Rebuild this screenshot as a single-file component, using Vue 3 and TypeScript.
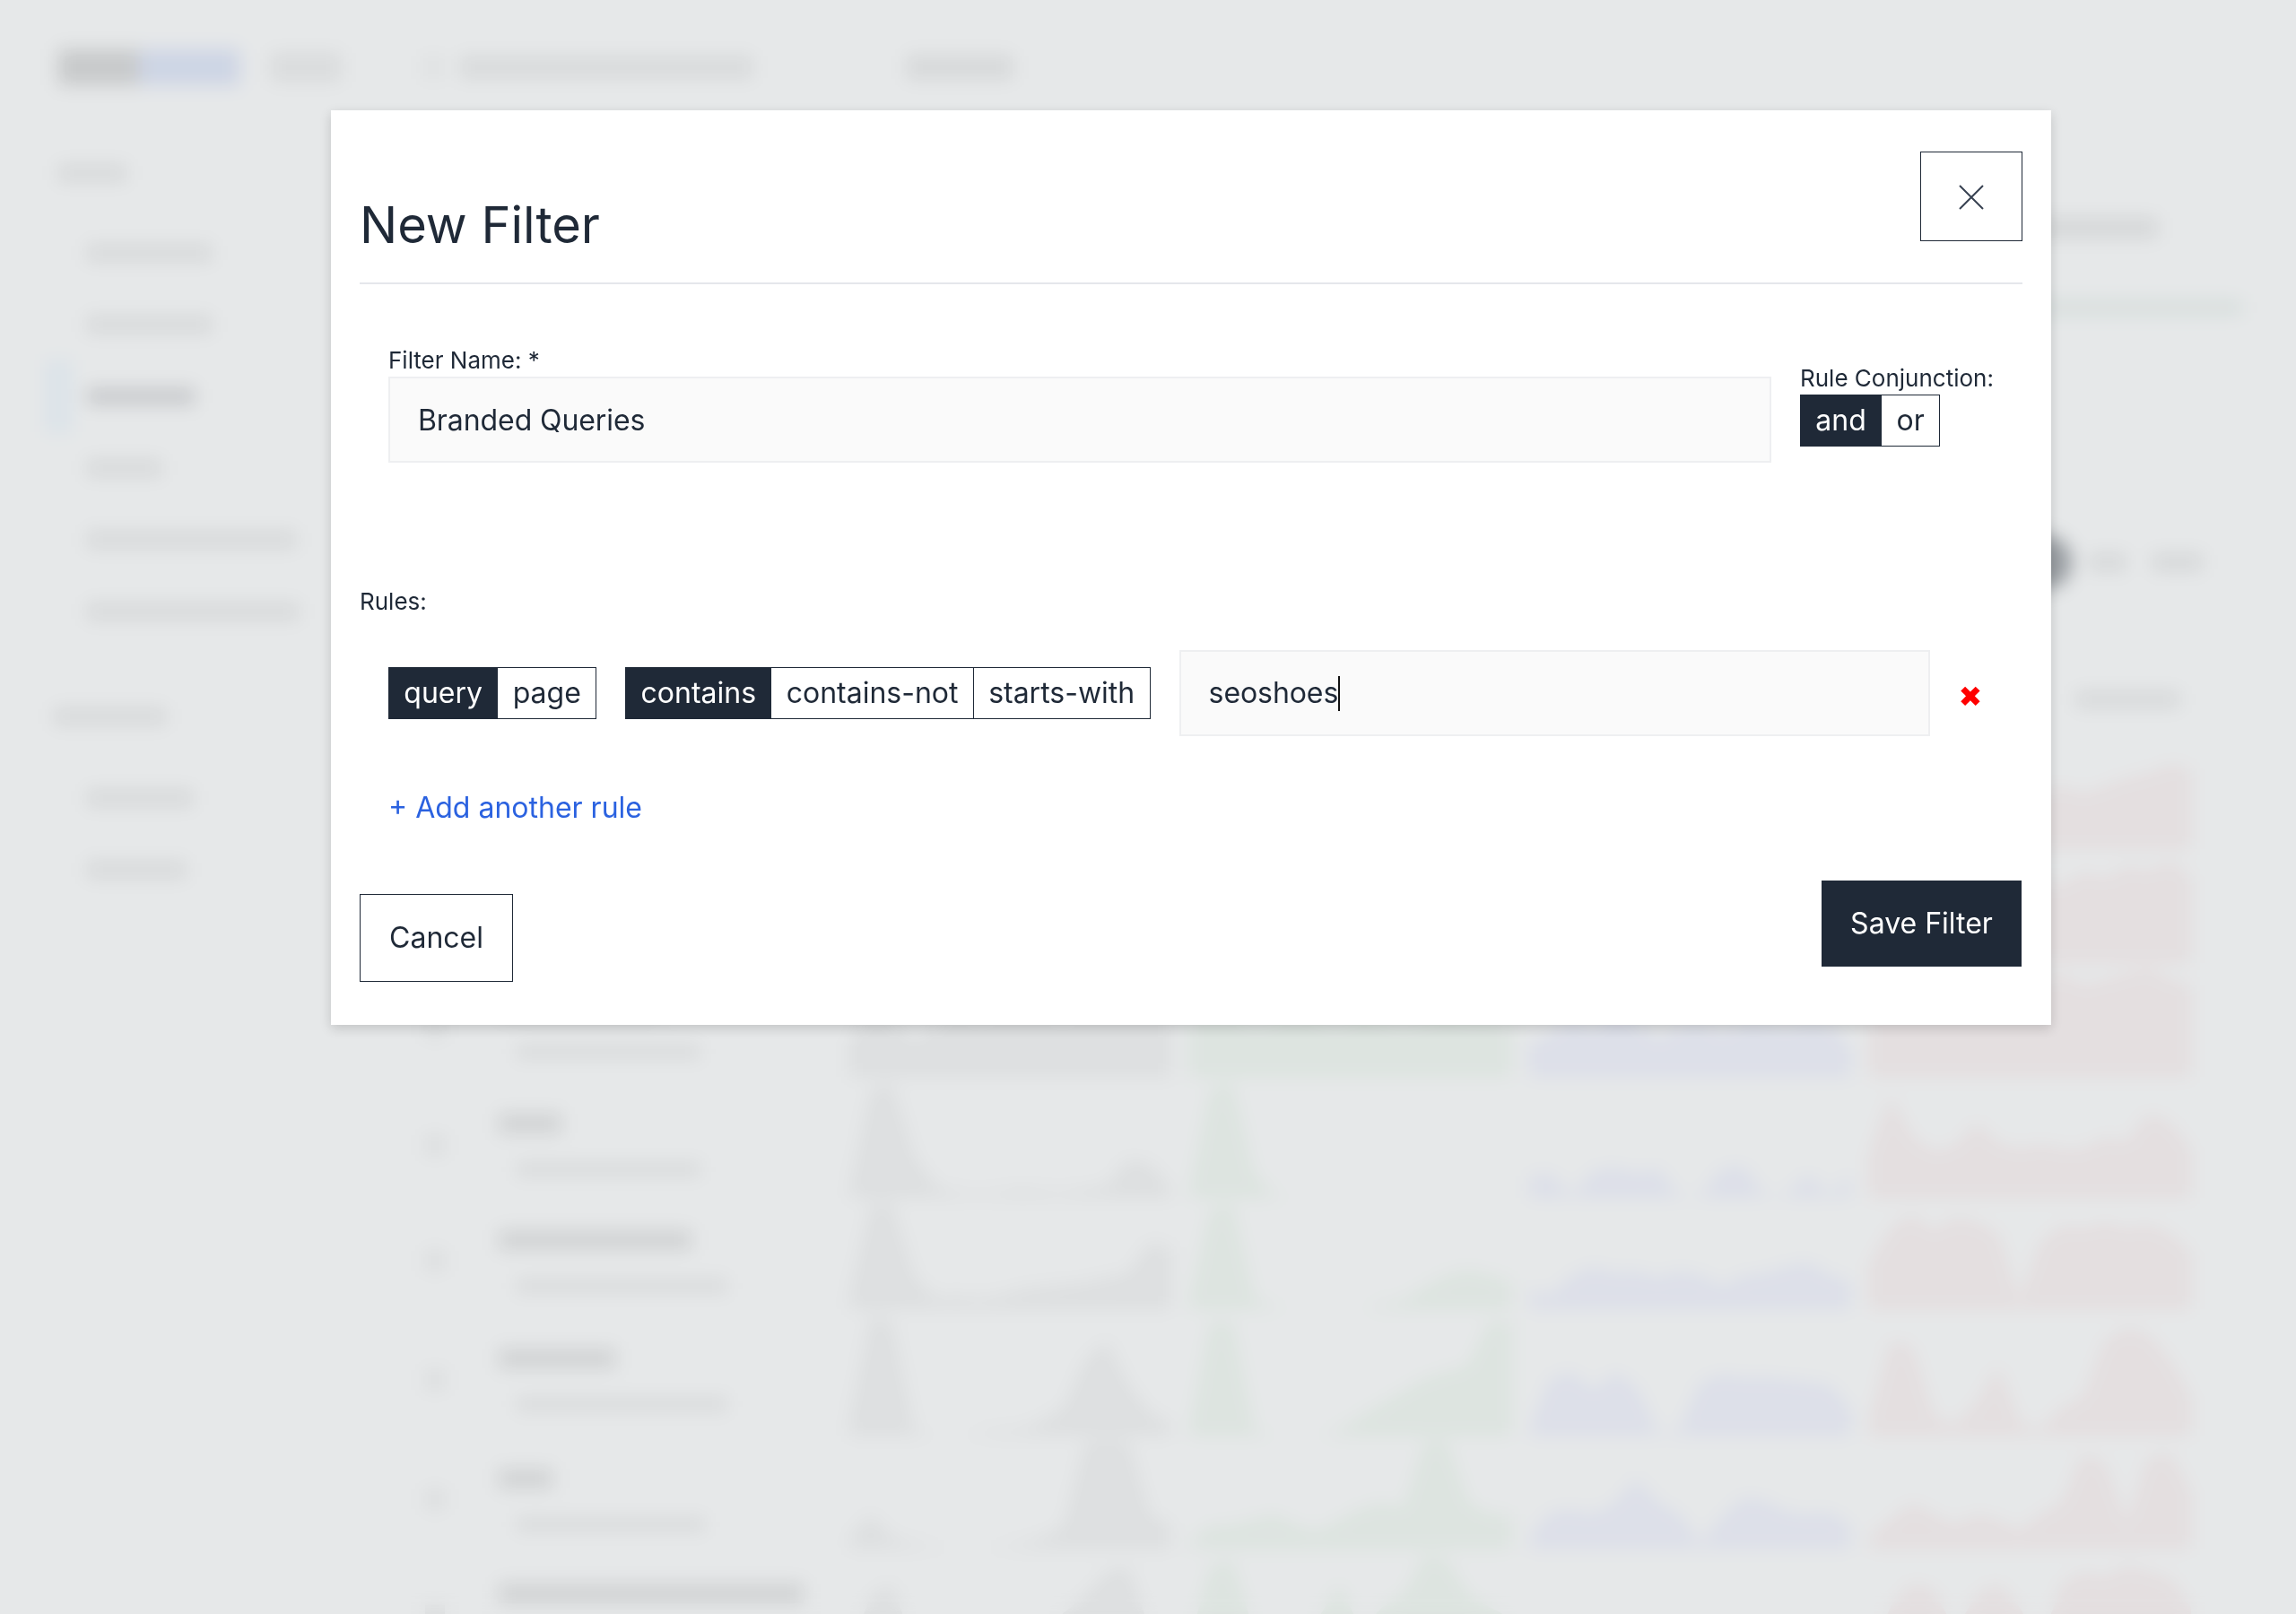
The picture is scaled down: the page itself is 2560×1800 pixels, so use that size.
<script setup lang="ts">
interface Row {
  height: number
  name: number
  sub: number
  charts: [number[], number[], number[], number[]]
}

const chartColors = ['grey', 'green', 'blue', 'red']

const flat = [0, 0, 0, 0, 0, 0, 0, 0, 0, 0, 0, 0, 0, 0, 0, 0]

const rows: Row[] = [
  { height: 127, name: 160, sub: 200, charts: [flat, flat, flat, [0.3, 0.35, 0.4, 0.38, 0.45, 0.5, 0.42, 0.46, 0.5, 0.55, 0.48, 0.55, 0.62, 0.66, 0.74, 0.7]] },
  { height: 127, name: 200, sub: 190, charts: [flat, flat, flat, [0.6, 0.72, 0.66, 0.7, 0.75, 0.62, 0.7, 0.8, 0.72, 0.68, 0.8, 0.74, 0.85, 0.8, 0.9, 0.75]] },
  { height: 127, name: 180, sub: 205, charts: [
    [0.3, 0.62, 0.5, 0.3, 0.45, 0.66, 0.5, 0.6, 0.7, 0.62, 0.5, 0.68, 0.75, 0.6, 0.7, 0.6],
    [0.5, 0.62, 0.55, 0.45, 0.5, 0.6, 0.5, 0.45, 0.55, 0.5, 0.45, 0.5, 0.55, 0.5, 0.5, 0.45],
    [0.3, 0.35, 0.55, 0.4, 0.65, 0.5, 0.3, 0.45, 0.5, 0.35, 0.5, 0.48, 0.42, 0.5, 0.45, 0.25],
    [0.8, 0.85, 0.9, 0.8, 0.85, 0.75, 0.9, 0.8, 0.85, 0.9, 0.8, 0.85, 0.9, 0.95, 0.85, 0.8]
  ] },
  { height: 135, name: 70, sub: 205, charts: [
    [0.05, 0.9, 0.95, 0.35, 0.1, 0.05, 0.04, 0.05, 0.08, 0.06, 0.05, 0.08, 0.1, 0.32, 0.28, 0.08],
    [0.02, 0.9, 0.95, 0.2, 0.02, 0, 0, 0, 0, 0, 0, 0, 0, 0, 0, 0],
    [0.18, 0.2, 0.02, 0.22, 0.25, 0.2, 0.24, 0.02, 0.02, 0.24, 0.26, 0.02, 0.03, 0.2, 0.02, 0.2],
    [0.35, 0.85, 0.5, 0.38, 0.42, 0.62, 0.45, 0.4, 0.44, 0.4, 0.4, 0.5, 0.45, 0.7, 0.62, 0.4]
  ] },
  { height: 124, name: 215, sub: 235, charts: [
    [0.1, 0.95, 0.95, 0.3, 0.1, 0.12, 0.1, 0.12, 0.18, 0.2, 0.22, 0.24, 0.28, 0.32, 0.6, 0.55],
    [0.05, 0.9, 0.95, 0.1, 0.02, 0, 0, 0, 0, 0.05, 0.08, 0.2, 0.3, 0.35, 0.3, 0.25],
    [0.18, 0.12, 0.3, 0.38, 0.32, 0.34, 0.28, 0.34, 0.3, 0.2, 0.3, 0.32, 0.38, 0.42, 0.3, 0.25],
    [0.4, 0.72, 0.85, 0.7, 0.82, 0.78, 0.68, 0.05, 0.6, 0.75, 0.72, 0.78, 0.72, 0.76, 0.68, 0.5]
  ] },
  { height: 141, name: 130, sub: 235, charts: [
    [0.1, 0.95, 0.9, 0.05, 0, 0, 0.02, 0.05, 0.05, 0.12, 0.22, 0.6, 0.75, 0.4, 0.18, 0.1],
    [0.02, 0.9, 0.9, 0.05, 0, 0, 0, 0.05, 0.15, 0.25, 0.35, 0.45, 0.5, 0.55, 0.9, 0.9],
    [0.05, 0.45, 0.5, 0.35, 0.5, 0.38, 0.02, 0.04, 0.42, 0.48, 0.45, 0.46, 0.44, 0.42, 0.4, 0.2],
    [0.1, 0.75, 0.7, 0.15, 0.08, 0.25, 0.55, 0.1, 0.05, 0.22, 0.3, 0.75, 0.85, 0.8, 0.6, 0.3]
  ] },
  { height: 126, name: 60, sub: 210, charts: [
    [0.1, 0.3, 0.1, 0.05, 0.02, 0, 0, 0.02, 0.05, 0.1, 0.2, 0.95, 0.95, 0.95, 0.3, 0.2],
    [0.05, 0.2, 0.2, 0.25, 0.3, 0.2, 0.15, 0.25, 0.35, 0.4, 0.35, 0.95, 0.95, 0.4, 0.3, 0.3],
    [0.1, 0.32, 0.34, 0.3, 0.4, 0.62, 0.4, 0.3, 0.04, 0.28, 0.45, 0.42, 0.32, 0.3, 0.32, 0.2],
    [0.1, 0.25, 0.4, 0.3, 0.2, 0.3, 0.25, 0.15, 0.3, 0.4, 0.85, 0.75, 0.2, 0.8, 0.85, 0.5]
  ] },
  { height: 130, name: 340, sub: 240, charts: [
    [0.1, 0.6, 0.7, 0.15, 0.05, 0.1, 0.2, 0.3, 0.25, 0.3, 0.45, 0.6, 0.8, 0.85, 0.3, 0.2],
    [0.2, 0.85, 0.9, 0.3, 0.1, 0.2, 0.4, 0.7, 0.3, 0.5, 0.6, 0.95, 0.9, 0.6, 0.5, 0.4],
    [0.05, 0.1, 0.05, 0.2, 0.1, 0.05, 0.1, 0.2, 0.1, 0.05, 0.2, 0.1, 0.05, 0.1, 0.1, 0.05],
    [0.1, 0.5, 0.7, 0.65, 0.3, 0.6, 0.7, 0.5, 0.2, 0.7, 0.8, 0.75, 0.85, 0.8, 0.75, 0.5]
  ] }
]

function points(values: number[]): string {
  const last = values.length - 1
  const line = values.map((v, i) => `${(i / last) * 100},${100 - v * 100}`).join(' ')
  return `0,100 ${line} 100,100`
}

const sideMain = [
  { width: 139, active: false },
  { width: 139, active: false },
  { width: 120, active: true },
  { width: 83, active: false },
  { width: 233, active: false },
  { width: 236, active: false }
]
const sideExtra = [{ width: 118 }, { width: 110 }]

const w = (width: number) => ({ width: `${width}px` })
</script>

<template>
  <div class="page" aria-hidden="true">
    <div class="topbar">
      <span class="logo-a"></span>
      <span class="logo-b"></span>
      <span class="logo-c"></span>
      <span class="search-icon"></span>
      <span class="search-text"></span>
      <span class="top-link"></span>
    </div>
    <div class="layout">
      <aside class="side">
        <span class="side-heading first"></span>
        <div v-for="(item, i) in sideMain" :key="i" class="side-item">
          <span class="marker" :class="{ on: item.active }"></span>
          <span class="side-text" :class="{ strong: item.active }" :style="w(item.width)"></span>
        </div>
        <span class="side-heading second"></span>
        <div v-for="(item, i) in sideExtra" :key="i" class="side-item">
          <span class="marker"></span>
          <span class="side-text" :style="w(item.width)"></span>
        </div>
      </aside>
      <main class="content">
        <span class="title-blob"></span>
        <span class="progress"></span>
        <div class="controls">
          <span class="ctl-dot"></span>
          <span class="ctl-pill first"></span>
          <span class="ctl-pill"></span>
        </div>
        <span class="caption"></span>
        <div class="table">
          <div v-for="(row, r) in rows" :key="r" class="row" :style="{ height: `${row.height}px` }">
            <div class="idx"><span class="idx-dot"></span></div>
            <div class="names">
              <span class="name" :style="w(row.name)"></span>
              <span class="sub" :style="w(row.sub)"></span>
            </div>
            <svg
              v-for="(chart, c) in row.charts"
              :key="c"
              class="chart"
              viewBox="0 0 100 100"
              preserveAspectRatio="none"
            >
              <polygon :class="chartColors[c]" :points="points(chart)" />
            </svg>
          </div>
        </div>
      </main>
    </div>
  </div>

  <div class="overlay">
    <section class="modal">
      <header class="modal-head">
        <h2 class="modal-title">New Filter</h2>
        <button class="close" type="button" aria-label="Close">
          <svg width="28" height="28" viewBox="0 0 28 28" fill="none">
            <path d="M1 1 27 27M27 1 1 27" stroke="#374151" stroke-width="2" />
          </svg>
        </button>
      </header>

      <div class="name-row">
        <div class="name-field">
          <label class="label">Filter Name: *</label>
          <input class="text-input" value="Branded Queries" readonly />
        </div>
        <div class="conj">
          <div class="label conj-label">Rule Conjunction:</div>
          <div class="seg">
            <button class="seg-btn on" type="button">and</button>
            <button class="seg-btn" type="button">or</button>
          </div>
        </div>
      </div>

      <div class="label rules-label">Rules:</div>
      <div class="rule">
        <div class="seg">
          <button class="seg-btn on" type="button">query</button>
          <button class="seg-btn" type="button">page</button>
        </div>
        <div class="seg">
          <button class="seg-btn on" type="button">contains</button>
          <button class="seg-btn" type="button">contains-not</button>
          <button class="seg-btn" type="button">starts-with</button>
        </div>
        <div class="value-input">seoshoes<span class="caret"></span></div>
        <span class="remove">✖</span>
      </div>

      <a class="add-rule">+ Add another rule</a>

      <footer class="modal-foot">
        <button class="btn-cancel" type="button">Cancel</button>
        <button class="btn-save" type="button">Save Filter</button>
      </footer>
    </section>
  </div>
</template>

<style scoped>
.page {
  width: 2560px;
  height: 1800px;
  overflow: hidden;
  background: #fff;
  display: flex;
  flex-direction: column;
}
.topbar {
  height: 140px;
  flex: none;
  display: flex;
  align-items: center;
  padding: 10px 0 0 65px;
  box-sizing: border-box;
}
.logo-a { width: 90px; height: 40px; background: #dedede; }
.logo-b { width: 112px; height: 40px; background: #e4eafb; }
.logo-c { width: 78px; height: 32px; margin-left: 35px; background: #f2f2f2; }
.search-icon { width: 22px; height: 26px; margin-left: 92px; background: #f8f8f8; }
.search-text { width: 326px; height: 24px; margin-left: 19px; background: #f0f0f0; }
.top-link { width: 118px; height: 26px; margin-left: 172px; background: #eeeeee; }

.layout { flex: 1; display: flex; min-height: 0; }
.side { width: 395px; flex: none; display: flex; flex-direction: column; padding-top: 33px; box-sizing: border-box; }
.side-heading { display: block; height: 18px; background: #eeeeee; flex: none; }
.side-heading.first { width: 76px; margin: 11px 0 40px 65px; }
.side-heading.second { width: 125px; margin: 68px 0 42px 60px; }
.side-item { height: 80px; flex: none; display: flex; align-items: center; }
.marker { width: 30px; height: 80px; margin-left: 50px; flex: none; }
.marker.on { background: #f4faff; }
.side-text { height: 18px; margin-left: 17px; background: #eeeeee; }
.side-text.strong { background: #dcdcde; }

.content { flex: 1; min-width: 0; display: flex; flex-direction: column; align-items: flex-end; padding-right: 60px; box-sizing: border-box; }
.content > * { flex: none; }
.title-blob { width: 300px; height: 22px; margin: 103px 95px 0 0; background: #ececec; }
.progress { width: 1000px; height: 16px; margin-top: 70px; background: #eff5f2; }
.controls { display: flex; align-items: center; height: 44px; margin: 254px 45px 0 0; gap: 30px; }
.ctl-dot { width: 110px; height: 60px; border-radius: 30px; background: #a8abaf; margin-right: -10px; }
.ctl-pill { width: 55px; height: 18px; background: #ececec; }
.ctl-pill.first { width: 40px; }
.caption { width: 115px; height: 16px; margin: 123px 70px 0 0; background: #ececec; }
.table { align-self: stretch; margin-right: 59px; margin-top: 32px; display: flex; flex-direction: column; }
.row {
  flex: none;
  display: grid;
  grid-template-columns: 141px 371px 359px 359px 359px 359px;
  column-gap: 20px;
}
.idx { display: flex; align-items: center; justify-content: flex-end; padding: 16px 40px 0 0; }
.idx-dot { width: 22px; height: 22px; background: #f4f4f4; }
.names { display: flex; flex-direction: column; justify-content: center; gap: 33px; padding-top: 16px; }
.name { height: 22px; background: #e8e8e8; }
.sub { height: 14px; margin-left: 20px; background: #f0f0f0; }
.chart { width: 100%; height: 100%; display: block; }
.grey { fill: #f6f6f6; }
.green { fill: #f5fbf5; }
.blue { fill: #f5f6ff; }
.red { fill: #fdf5f5; }

.overlay {
  position: fixed;
  inset: 0;
  background: rgba(31, 41, 55, 0.11);
  backdrop-filter: blur(10px);
}
.modal {
  position: absolute;
  left: 369px;
  top: 123px;
  width: 1918px;
  box-sizing: border-box;
  padding: 46px 32px 48px;
  background: #fff;
  color: #1f2937;
  font-family: Inter, "Liberation Sans", sans-serif;
  box-shadow: 0 4px 12px rgba(0, 0, 0, 0.16);
}
.modal-head {
  display: flex;
  justify-content: space-between;
  align-items: flex-start;
  padding-bottom: 22px;
  border-bottom: 2px solid #e5e7eb;
}
.modal-title {
  margin: 40px 0 0;
  font-size: 56px;
  line-height: 84px;
  font-weight: 400;
}
.close {
  width: 114px;
  height: 100px;
  padding: 2px 0 0;
  display: flex;
  align-items: center;
  justify-content: center;
  background: #fff;
  border: 1px solid #1f2937;
}
.label { font-size: 26px; line-height: 36px; }
.name-row {
  display: flex;
  align-items: center;
  gap: 32px;
  padding: 67px 0 0 32px;
}
.name-field { width: 1542px; flex: none; display: flex; flex-direction: column; }
.conj-label { line-height: 37px; padding-top: 1px; }
.text-input,
.value-input {
  box-sizing: border-box;
  height: 96px;
  padding: 0 31px;
  background: #fafafa;
  border: 2px solid #eeeff1;
  outline: none;
  color: #1f2937;
  font: 400 32px/48px Inter, "Liberation Sans", sans-serif;
  letter-spacing: -0.08px;
}
.text-input { width: 100%; }
.seg { display: flex; flex: none; }
.seg-btn {
  height: 58px;
  padding: 0 16.33px;
  background: #fff;
  border: 1px solid #1f2937;
  margin-left: -1px;
  color: #1f2937;
  font: 400 32px/48px Inter, "Liberation Sans", sans-serif;
}
.seg-btn:first-child { margin-left: 0; }
.seg-btn.on { background: #1f2937; color: #fff; }
.rules-label { margin-top: 137px; }
.rule {
  display: flex;
  align-items: center;
  gap: 32px;
  margin-top: 36px;
  padding-left: 32px;
}
.value-input {
  width: 837px;
  flex: none;
  display: flex;
  align-items: center;
}
.caret { width: 2px; height: 39px; background: #111; flex: none; }
.remove {
  color: #f00;
  font: 400 32px/48px "DejaVu Sans", sans-serif;
  margin-top: 8px;
}
.add-rule {
  display: block;
  margin: 56px 0 0 32px;
  color: #2b62e0;
  font-size: 32px;
  line-height: 48px;
}
.modal-foot {
  display: flex;
  justify-content: space-between;
  align-items: flex-start;
  margin: 57px 1px 0 0;
}
.btn-cancel,
.btn-save {
  font: 400 32px/48px Inter, "Liberation Sans", sans-serif;
}
.btn-cancel {
  width: 171px;
  height: 98px;
  margin-top: 15px;
  padding: 0;
  background: #fff;
  color: #1f2937;
  border: 1px solid #1f2937;
}
.btn-save {
  width: 223px;
  height: 96px;
  padding: 0;
  background: #1f2937;
  color: #fff;
  border: 0;
}
</style>

<style>
html, body { margin: 0; background: #fff; overflow: hidden; }
</style>
